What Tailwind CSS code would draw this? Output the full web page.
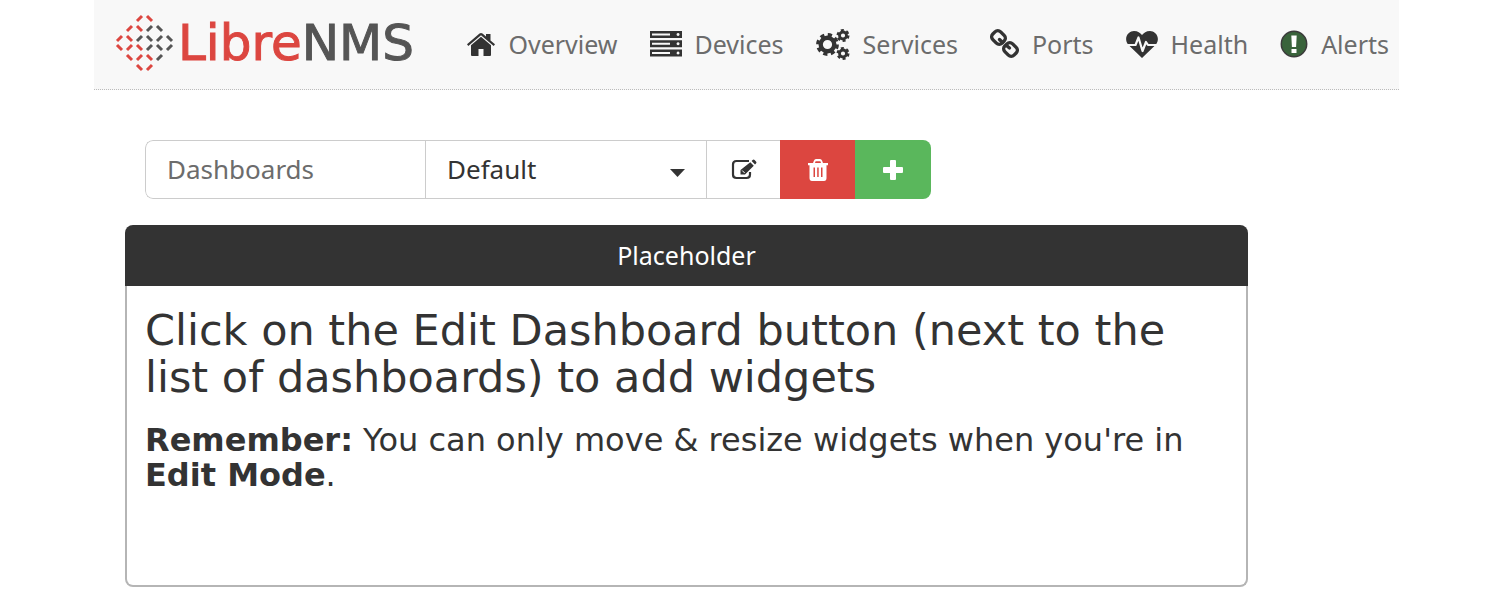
<!DOCTYPE html>
<html lang="en">
<head>
<meta charset="utf-8">
<meta name="viewport" content="width=device-width, initial-scale=1">
<title>LibreNMS</title>
<script src="https://cdn.jsdelivr.net/npm/@tailwindcss/browser@4"></script>
</head>
<body class="bg-white font-['Noto_Sans',sans-serif] text-[#333]">
<div class="ml-[94px] mr-[95px]">
  <header class="flex h-[90px] items-center border-b border-dotted border-[#bbb] bg-[#f8f8f8] pl-5 pr-2.5">
    <a href="#" class="flex items-center gap-0.5 pb-1" aria-label="LibreNMS">
      <svg class="size-[62px] shrink-0" viewBox="0 0 62 62" fill="none" stroke-width="3" aria-hidden="true">
        <path stroke="#dc4640" d="M23 9l5-5M33 4l5 5M13 19l5-5M23 14l5 5M3 29l5-5M13 24l5 5M3 33l5 5M13 38l5-5M23 33l5 5M13 43l5 5M23 48l5-5M33 43l5 5M23 53l5 5M33 58l5-5"/>
        <path stroke="#555" d="M33 19l5-5M43 14l5 5M23 29l5-5M33 24l5 5M43 29l5-5M53 24l5 5M33 38l5-5M43 33l5 5M53 38l5-5M43 48l5-5"/>
      </svg>
      <span class="font-['DejaVu_Sans',sans-serif] text-[50px] leading-[56px] text-[#dc4640] [-webkit-text-stroke:1px_currentColor]">Libre<span class="text-[#555]">NMS</span></span>
    </a>
    <nav class="ml-auto flex items-center gap-8 pb-0.5 text-[25px] leading-9 text-[#6c6c6c] whitespace-nowrap" aria-label="Main">
      <a href="#" class="flex items-center gap-[13px]">
        <svg class="h-8 w-[28px] shrink-0 text-[#333]" viewBox="0 0 28 32" fill="currentColor"><path d="M14 8.800L4 17.300V27q0 1 1 1h6.500v-7h5v7H23q1 0 1-1V17.300zM0 16.200L12.500 5.600q1.500-1.200 3 0L19 8.600V6h4.500v6.500L28 16.200 26.700 18 14 7.300 1.300 18z"/></svg>Overview</a>
      <a href="#" class="flex items-center gap-[13px]">
        <svg class="h-8 w-[32px] shrink-0 text-[#333]" viewBox="0 0 32 32" fill="currentColor" fill-rule="evenodd"><path d="M0 3h32v7H0zM2 5.500v2h18v-2zM28 5a1.500 1.500 0 1 0 .1 0zM0 12.300h32v7H0zM2 14.800v2h18v-2zM28 14.300a1.500 1.500 0 1 0 .1 0zM0 21.600h32v7H0zM2 24.100v2h18v-2zM28 23.600a1.500 1.500 0 1 0 .1 0z"/></svg>Devices</a>
      <a href="#" class="flex items-center gap-[13px]">
        <svg class="h-8 w-[34px] shrink-0" viewBox="0 0 34 32" fill="none" stroke="#333"><circle cx="11.500" cy="16.500" r="6.800" stroke-width="4.400"/><circle cx="11.500" cy="16.500" r="9.800" stroke-width="3.200" stroke-dasharray="4.200 3.497"/><circle cx="27" cy="7.500" r="3.500" stroke-width="2.800"/><circle cx="27" cy="7.500" r="5.300" stroke-width="2.400" stroke-dasharray="2.900 2.650"/><circle cx="27" cy="25.500" r="3.500" stroke-width="2.800"/><circle cx="27" cy="25.500" r="5.300" stroke-width="2.400" stroke-dasharray="2.900 2.650"/></svg>Services</a>
      <a href="#" class="flex items-center gap-[13px]">
        <svg class="h-8 w-[29px] shrink-0" viewBox="0 0 29 32" fill="none" stroke="#333" stroke-width="3.400"><rect x="-6.500" y="-5.500" width="13" height="11" rx="4" transform="translate(8.500 9.500) rotate(45)"/><rect x="-6.500" y="-5.500" width="13" height="11" rx="4" transform="translate(20.500 21.500) rotate(45)"/><path stroke-linecap="round" d="M9.500 11.500L12.500 14.500M16.500 17.500l3 2.500"/></svg>Ports</a>
      <a href="#" class="flex items-center gap-[13px]">
        <svg class="h-8 w-[32px] shrink-0" viewBox="0 0 32 32"><path fill="#333" d="M16 30L2 16.500C-3 9 3 3 8 3c4 0 6 2 8 4 2-2 4-4 8-4 5 0 11 6 6 13.500z"/><path fill="none" stroke="#f8f8f8" stroke-width="2.200" stroke-linejoin="round" d="M0 17h9.500l3-7.500 4 13.500 3.500-9 2 3H32"/></svg>Health</a>
      <a href="#" class="flex items-center gap-[13px]">
        <svg class="h-8 w-[28px] shrink-0" viewBox="0 0 28 32"><circle cx="14" cy="16" r="12.700" fill="#39633b" stroke="#3b3b3b" stroke-width="1.500"/><path fill="#fff" d="M11.300 7.500h5.400l-.6 11.500h-4.200zM11.500 21h5v4h-5z"/></svg>Alerts</a>
    </nav>
  </header>

  <main class="pl-[31px] pr-[151px] pt-[50px]">
    <div class="ml-5 flex h-[59px] w-[786px] max-w-full overflow-hidden rounded-lg text-[26px]">
      <label for="dashboard" class="flex w-[280px] items-center rounded-l-lg border border-r-0 border-[#ccc] pl-[21px] text-[#6c6c6c]">Dashboards</label>
      <div class="relative flex w-[282px]">
        <select id="dashboard" class="w-full appearance-none border border-[#ccc] bg-white pl-[21px] text-[#333]"><option>Default</option></select>
        <svg class="pointer-events-none absolute right-[22px] top-[29px] h-2 w-[15px]" viewBox="0 0 15 8"><path fill="#333" d="M0 0h15L7.500 8z"/></svg>
      </div>
      <button type="button" aria-label="Edit dashboard" class="flex w-[73px] items-center justify-center border-y border-[#ccc] bg-white">
        <svg class="h-6 w-[26px]" viewBox="0 0 26 24" fill="none" stroke="#333"><path stroke-width="2.200" d="M18 3H5.500Q2 3 2 6.500v10Q2 20 5.500 20h10q3.500 0 3.500-3.500V14"/><path fill="#333" stroke="none" d="M19.300 4.200l3.500 3.500L14 16.500H9.500V12zM20.600 3l1-1q1-1 2 0l1.400 1.400q1 1 0 2l-1 1z"/><path stroke="#fff" stroke-width="1" d="M11.200 12.500l2.500 2.500"/></svg>
      </button>
      <button type="button" aria-label="Delete dashboard" class="flex w-[75px] items-center justify-center bg-[#dc4640]">
        <svg class="h-6 w-5" viewBox="0 0 20 24"><path fill="#fff" fill-rule="evenodd" d="M0 5h5l1-2.500Q6.500 1 8 1h4q1.500 0 2 1.500L15 5h5v2.200h-1.500V20q0 3-2.500 3H4q-2.500 0-2.500-3V7.200H0zM7 5h6l-.6-1.700H7.600zM5.500 9.500v9.500h1.500V9.500zM9.200 9.500v9.500h1.500V9.500zM13 9.500v9.500h1.500V9.500z"/></svg>
      </button>
      <button type="button" aria-label="Add dashboard" class="flex flex-1 items-center justify-center bg-[#5ab75c]">
        <svg class="size-5" viewBox="0 0 20 20"><path fill="#fff" d="M8 0h4q1 0 1 1v6h6q1 0 1 1v4q0 1-1 1h-6v6q0 1-1 1H8q-1 0-1-1v-6H1q-1 0-1-1V8q0-1 1-1h6V1q0-1 1-1z"/></svg>
      </button>
    </div>

    <section class="mt-[26px]">
      <h2 class="flex h-[61px] items-center justify-center rounded-t-lg bg-[#333] text-[25px] text-white">Placeholder</h2>
      <div class="min-h-[301px] rounded-b-lg border-2 border-t-0 border-[#b5b5b5] px-[18px] pt-[21px] font-['DejaVu_Sans',sans-serif]">
        <h1 class="text-[43px] leading-[47px]">Click on the Edit Dashboard button (next to the list of dashboards) to add widgets</h1>
        <p class="mt-[22px] text-[32px] leading-[35px]"><strong>Remember:</strong> You can only move &amp; resize widgets when you're in <strong>Edit Mode</strong>.</p>
      </div>
    </section>
  </main>
</div>
</body>
</html>
